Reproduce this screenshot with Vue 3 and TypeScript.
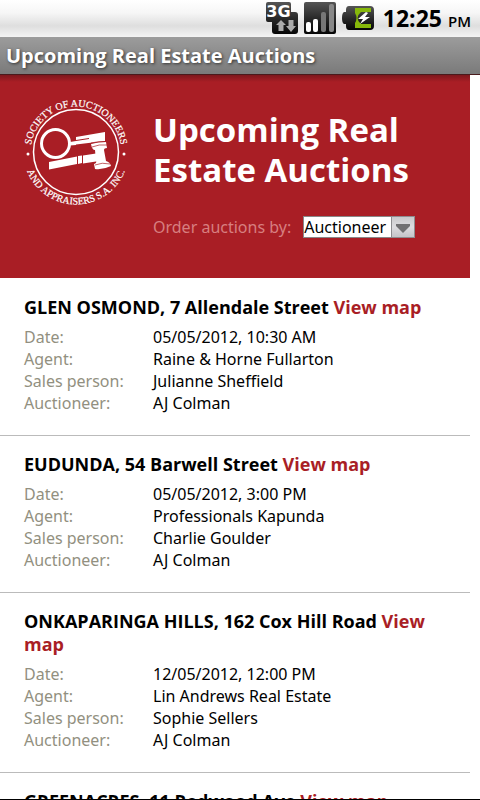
<script setup lang="ts">
import { ref } from 'vue'

interface Auction {
  id: number
  address: string
  details: { label: string; value: string }[]
}

function makeAuction(id: number, address: string, date: string, agent: string, sales: string, auctioneer: string): Auction {
  return {
    id,
    address,
    details: [
      { label: 'Date:', value: date },
      { label: 'Agent:', value: agent },
      { label: 'Sales person:', value: sales },
      { label: 'Auctioneer:', value: auctioneer },
    ],
  }
}

const order = ref('Auctioneer')

const auctions: Auction[] = [
  makeAuction(1, 'GLEN OSMOND, 7 Allendale Street', '05/05/2012, 10:30 AM', 'Raine & Horne Fullarton', 'Julianne Sheffield', 'AJ Colman'),
  makeAuction(2, 'EUDUNDA, 54 Barwell Street', '05/05/2012, 3:00 PM', 'Professionals Kapunda', 'Charlie Goulder', 'AJ Colman'),
  makeAuction(3, 'ONKAPARINGA HILLS, 162 Cox Hill Road', '12/05/2012, 12:00 PM', 'Lin Andrews Real Estate', 'Sophie Sellers', 'AJ Colman'),
  { id: 4, address: 'GREENACRES, 11 Redwood Ave', details: [] },
]
</script>

<template>
  <div class="screen">
    <div class="status">
      <svg class="icon-3g" width="32" height="32" viewBox="0 0 32 32" aria-hidden="true">
        <defs>
          <linearGradient id="dark" x1="0" y1="0" x2="0" y2="1">
            <stop offset="0" stop-color="#555" />
            <stop offset="0.5" stop-color="#2a2a2a" />
            <stop offset="1" stop-color="#050505" />
          </linearGradient>
        </defs>
        <path d="M2 0H23Q25 0 25 2V10H29Q32 10 32 13V29Q32 32 29 32H9Q6 32 6 29V20H2Q0 20 0 18V2Q0 0 2 0Z" fill="url(#dark)" />
        <text x="12.500" y="15" text-anchor="middle" class="network">3G</text>
        <path d="M15 18L20 23H17.500V29H12.500V23H10Z" fill="#aaa" />
        <path d="M25 30L20 24H22.500V18H27.500V24H30Z" fill="#aaa" />
      </svg>
      <svg class="icon-signal" width="32" height="32" viewBox="0 0 32 32" aria-hidden="true">
        <rect width="32" height="32" rx="2" fill="url(#dark)" />
        <rect x="2" y="20" width="5" height="10" rx="2" fill="#fff" />
        <rect x="9" y="17" width="5" height="13" rx="2" fill="#fff" />
        <rect x="17" y="10" width="5" height="20" rx="2" fill="#777" />
        <rect x="25" y="2" width="5" height="28" rx="2" fill="#888" />
      </svg>
      <svg class="icon-battery" width="32" height="24" viewBox="0 0 32 24" aria-hidden="true">
        <path d="M7 0H28Q32 0 32 4V20Q32 24 28 24H7Q4 24 4 20V18H2Q0 17 0 12Q0 7 2 6H4V4Q4 0 7 0Z" fill="url(#dark)" />
        <path d="M13 2H29V6H19Q12 12 19 18H29V22H13V17Q16 12 13 7Z" fill="#86b80a" />
        <path d="M24 6L16 13H21L18 18L28 11H23L26 7Z" fill="#fff" />
      </svg>
      <time class="clock">12:25 <span class="meridiem">PM</span></time>
    </div>

    <div class="titlebar">Upcoming Real Estate Auctions</div>

    <main class="page">
      <header class="banner">
        <svg class="logo" width="106" height="106" viewBox="0 0 106 106" role="img" aria-label="Society of Auctioneers and Appraisers S.A. Inc.">
          <defs>
            <path id="arc-top" d="M7.500 53A45.500 45.500 0 0 1 98.500 53" />
            <path id="arc-bottom" d="M0.500 53A52.500 52.500 0 0 0 105.500 53" />
          </defs>
          <circle cx="53" cy="53" r="42.500" fill="none" stroke="#fff" stroke-width="1.500" />
          <text class="logo-text" text-anchor="middle"><textPath href="#arc-top" startOffset="50%">SOCIETY OF AUCTIONEERS</textPath></text>
          <text class="logo-text" text-anchor="middle"><textPath href="#arc-bottom" startOffset="50%">AND APPRAISERS S.A. INC.</textPath></text>
          <circle cx="5" cy="55" r="1.500" fill="#fff" />
          <circle cx="101" cy="55" r="1.500" fill="#fff" />
          <circle cx="32.500" cy="44.500" r="14" fill="none" stroke="#fff" stroke-width="3" />
          <path d="M47 43L53 42V46L47 46.500Z" fill="#fff" />
          <path d="M53 38L82 33V42L53 45.500Z" fill="#fff" />
          <path d="M53 41.500L66 39.500" stroke="#a91e25" stroke-width="1" />
          <path d="M26 63L54 57.500V65L26 70.500Z" fill="#fff" />
          <path d="M55 57L59 56.500V64L55 65ZM60 56.500L73 54.500V62.500L60 64.500Z" fill="#fff" />
          <path d="M68 45Q75 43 83 43L84 49Q81 49 81 51L83 62Q87 63 88 67Q80 71 72 70L71 65Q74 64 73 62L72 51Q69 51 68 45Z" fill="#fff" />
          <path d="M68 44Q76 42 84 42.500M69 48Q76 45 84 46M72 66Q79 63 87 65" stroke="#a91e25" stroke-width="0.700" fill="none" />
        </svg>
        <div class="intro">
          <h1>Upcoming Real Estate Auctions</h1>
          <form class="order" @submit.prevent>
            <label for="order">Order auctions by:</label>
            <span class="picker">
              <select id="order" v-model="order">
                <option>Auctioneer</option>
                <option>Date</option>
                <option>Agent</option>
              </select>
              <svg class="arrow" width="24" height="22" viewBox="0 0 24 22" aria-hidden="true">
                <defs>
                  <linearGradient id="knob" x1="0" y1="0" x2="0" y2="1">
                    <stop offset="0" stop-color="#c8c8ca" />
                    <stop offset="0.500" stop-color="#dcdcdf" />
                    <stop offset="1" stop-color="#c4c4c8" />
                  </linearGradient>
                </defs>
                <rect x="0.500" y="0.500" width="23" height="21" fill="url(#knob)" stroke="#8d8d90" />
                <path d="M5 8H19V10L12 17L5 10Z" fill="#707072" />
              </svg>
            </span>
          </form>
        </div>
      </header>

      <section class="list">
        <article v-for="auction in auctions" :key="auction.id" class="auction">
          <h2>{{ auction.address }} <a href="#map">View map</a></h2>
          <dl>
            <template v-for="row in auction.details" :key="row.label">
              <dt>{{ row.label }}</dt>
              <dd>{{ row.value }}</dd>
            </template>
          </dl>
        </article>
      </section>
    </main>
  </div>
</template>

<style>
body {
  margin: 0;
}
</style>

<style scoped>
.screen {
  box-sizing: border-box;
  height: 100vh;
  display: flex;
  flex-direction: column;
  overflow: hidden;
  background: #fff;
  color: #000;
  border-bottom: 1px solid #000;
  font-family: "Noto Sans", "Open Sans", sans-serif;
  font-size: 16px;
  line-height: 22px;
}

.status {
  flex: none;
  box-sizing: border-box;
  height: 37px;
  padding: 0 9px 2px 0;
  display: flex;
  align-items: center;
  justify-content: flex-end;
  gap: 6px;
  background: linear-gradient(#fff 0%, #f6f6f6 35%, #dedede 70%, #f4f4f4 100%);
}

.network {
  font-family: "DejaVu Sans", sans-serif;
  font-size: 16px;
  font-weight: 700;
  fill: #fff;
}

.clock {
  margin-left: 3px;
  padding-top: 4px;
  font-family: "Open Sans", sans-serif;
  font-size: 23px;
  font-weight: 700;
  white-space: nowrap;
}

.meridiem {
  font-size: 15px;
  font-weight: 600;
}

.titlebar {
  flex: none;
  box-sizing: border-box;
  height: 38px;
  padding: 0 6px;
  line-height: 37px;
  background: linear-gradient(#9c9c9c, #7a7a7a);
  color: #fff;
  border-bottom: 1px solid #4a1a1c;
  font-family: "Open Sans", sans-serif;
  font-size: 20px;
  font-weight: 700;
  text-shadow: 1px 1px 3px #333;
}

.page {
  flex: 1;
  min-height: 0;
  overflow: hidden;
  padding-right: 10px;
}

.banner {
  display: flex;
  align-items: flex-start;
  gap: 24px;
  padding: 24px 24px 40px 23px;
  background: linear-gradient(#7d171c, #a91e25 7px);
}

.logo {
  flex: none;
  overflow: visible;
}

.logo-text {
  font-family: "Liberation Serif", serif;
  font-size: 10px;
  fill: #fff;
  stroke: #fff;
  stroke-width: 0.2px;
}

.intro {
  flex: 1;
  padding-top: 11px;
}

h1 {
  margin: 0 0 26px;
  color: #fff;
  font-family: "Open Sans", sans-serif;
  font-size: 33px;
  font-weight: 700;
  line-height: 40px;
}

.order {
  display: flex;
  align-items: center;
  gap: 12px;
}

.order label {
  color: #d77f80;
  white-space: nowrap;
}

.picker {
  position: relative;
  display: flex;
}

select {
  appearance: none;
  width: 112px;
  height: 22px;
  padding: 0 24px 0 0;
  border: 1px solid #888;
  border-radius: 0;
  background: #fff;
  color: #000;
  font: inherit;
  line-height: 20px;
}

.arrow {
  position: absolute;
  top: 0;
  right: 0;
  pointer-events: none;
}

.list {
  padding-top: 1px;
}

.auction {
  padding: 17px 24px 21px;
  border-bottom: 1px solid #bbb;
}

h2 {
  margin: 0 0 7px;
  font-family: "Open Sans", sans-serif;
  font-size: 18px;
  font-weight: 700;
  line-height: 23px;
}

h2 a {
  color: #a91e25;
  text-decoration: none;
}

dl {
  display: grid;
  grid-template-columns: 129px 1fr;
  margin: 0;
}

dt {
  color: #929080;
}

dd {
  margin: 0;
}
</style>
